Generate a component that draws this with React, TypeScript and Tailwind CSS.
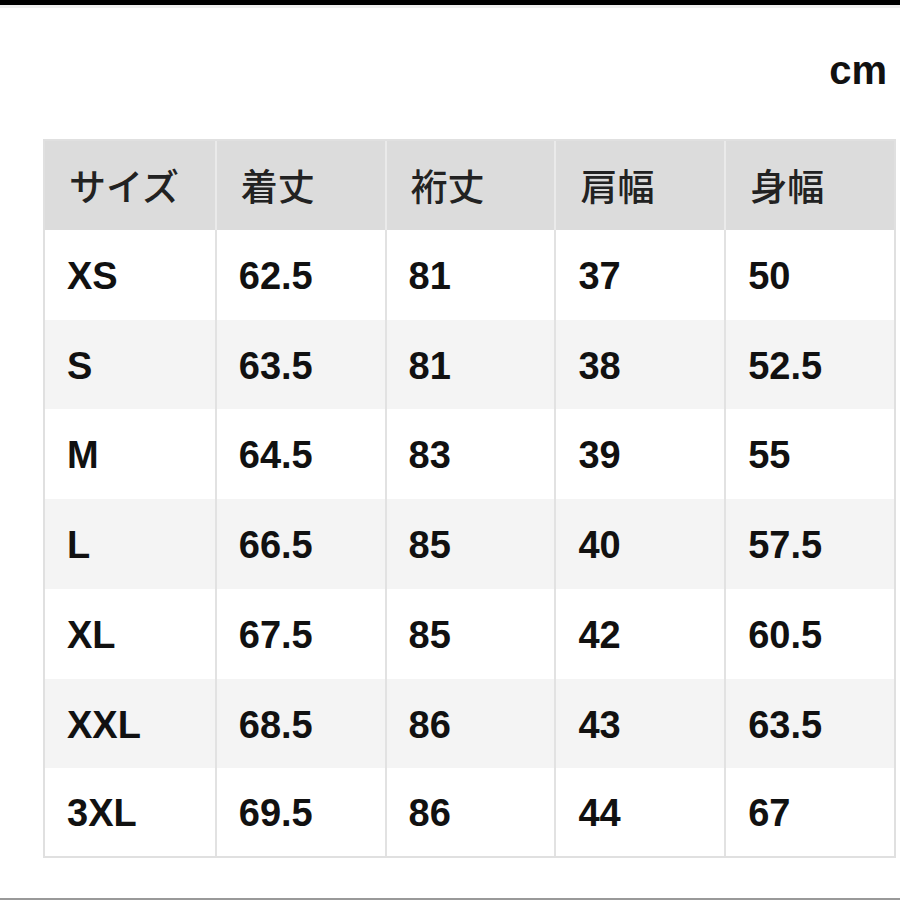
import React from "react";

const headers = ["サイズ", "着丈", "裄丈", "肩幅", "身幅"];
const rows = [
  ["XS", "62.5", "81", "37", "50"],
  ["S", "63.5", "81", "38", "52.5"],
  ["M", "64.5", "83", "39", "55"],
  ["L", "66.5", "85", "40", "57.5"],
  ["XL", "67.5", "85", "42", "60.5"],
  ["XXL", "68.5", "86", "43", "63.5"],
  ["3XL", "69.5", "86", "44", "67"],
];
const heights = ["h-[90px]", "h-[89px]", "h-[90px]", "h-[90px]", "h-[90px]", "h-[89px]", "h-[88px]"];

export default function App() {
  return (
    <div className="w-[900px] h-[900px] bg-white flex flex-col overflow-hidden" style={{ fontFamily: '"Liberation Sans", Arial, sans-serif' }}>
      <div className="h-[5px] bg-black shrink-0" />
      <div className="h-[3px] bg-[#f0f0f0] shrink-0" />
      <div className="h-[131px] shrink-0 flex justify-end pr-[13px] pt-[42px]">
        <span className="text-[40px] font-bold leading-none text-[#111]">cm</span>
      </div>
      <div className="ml-[43px] w-[853px] border-2 border-[#e0e0e0] shrink-0">
        <div className="grid grid-cols-5 h-[89px] bg-[#dcdcdc]">
          {headers.map((h, i) => (
            <div
              key={h}
              className={`flex items-center pl-[24px] text-[37px] font-medium text-[#222] ${i > 0 ? "border-l-2 border-[#eaeaea]" : ""}`}
              style={{ fontFamily: '"Noto Sans CJK JP", sans-serif' }}
            >
              {h}
            </div>
          ))}
        </div>
        {rows.map((r, ri) => (
          <div key={r[0]} className={`grid grid-cols-5 ${heights[ri]} ${ri % 2 === 1 ? "bg-[#f4f4f4]" : "bg-white"}`}>
            {r.map((c, i) => (
              <div
                key={i}
                className={`flex items-center pl-[22px] pt-[3px] text-[38px] font-bold text-[#111] ${i > 0 ? "border-l-2 border-[#e2e2e2]" : ""}`}
              >
                {c}
              </div>
            ))}
          </div>
        ))}
      </div>
      <div className="flex-1" />
      <div className="h-[2px] bg-[#999] shrink-0" />
    </div>
  );
}
